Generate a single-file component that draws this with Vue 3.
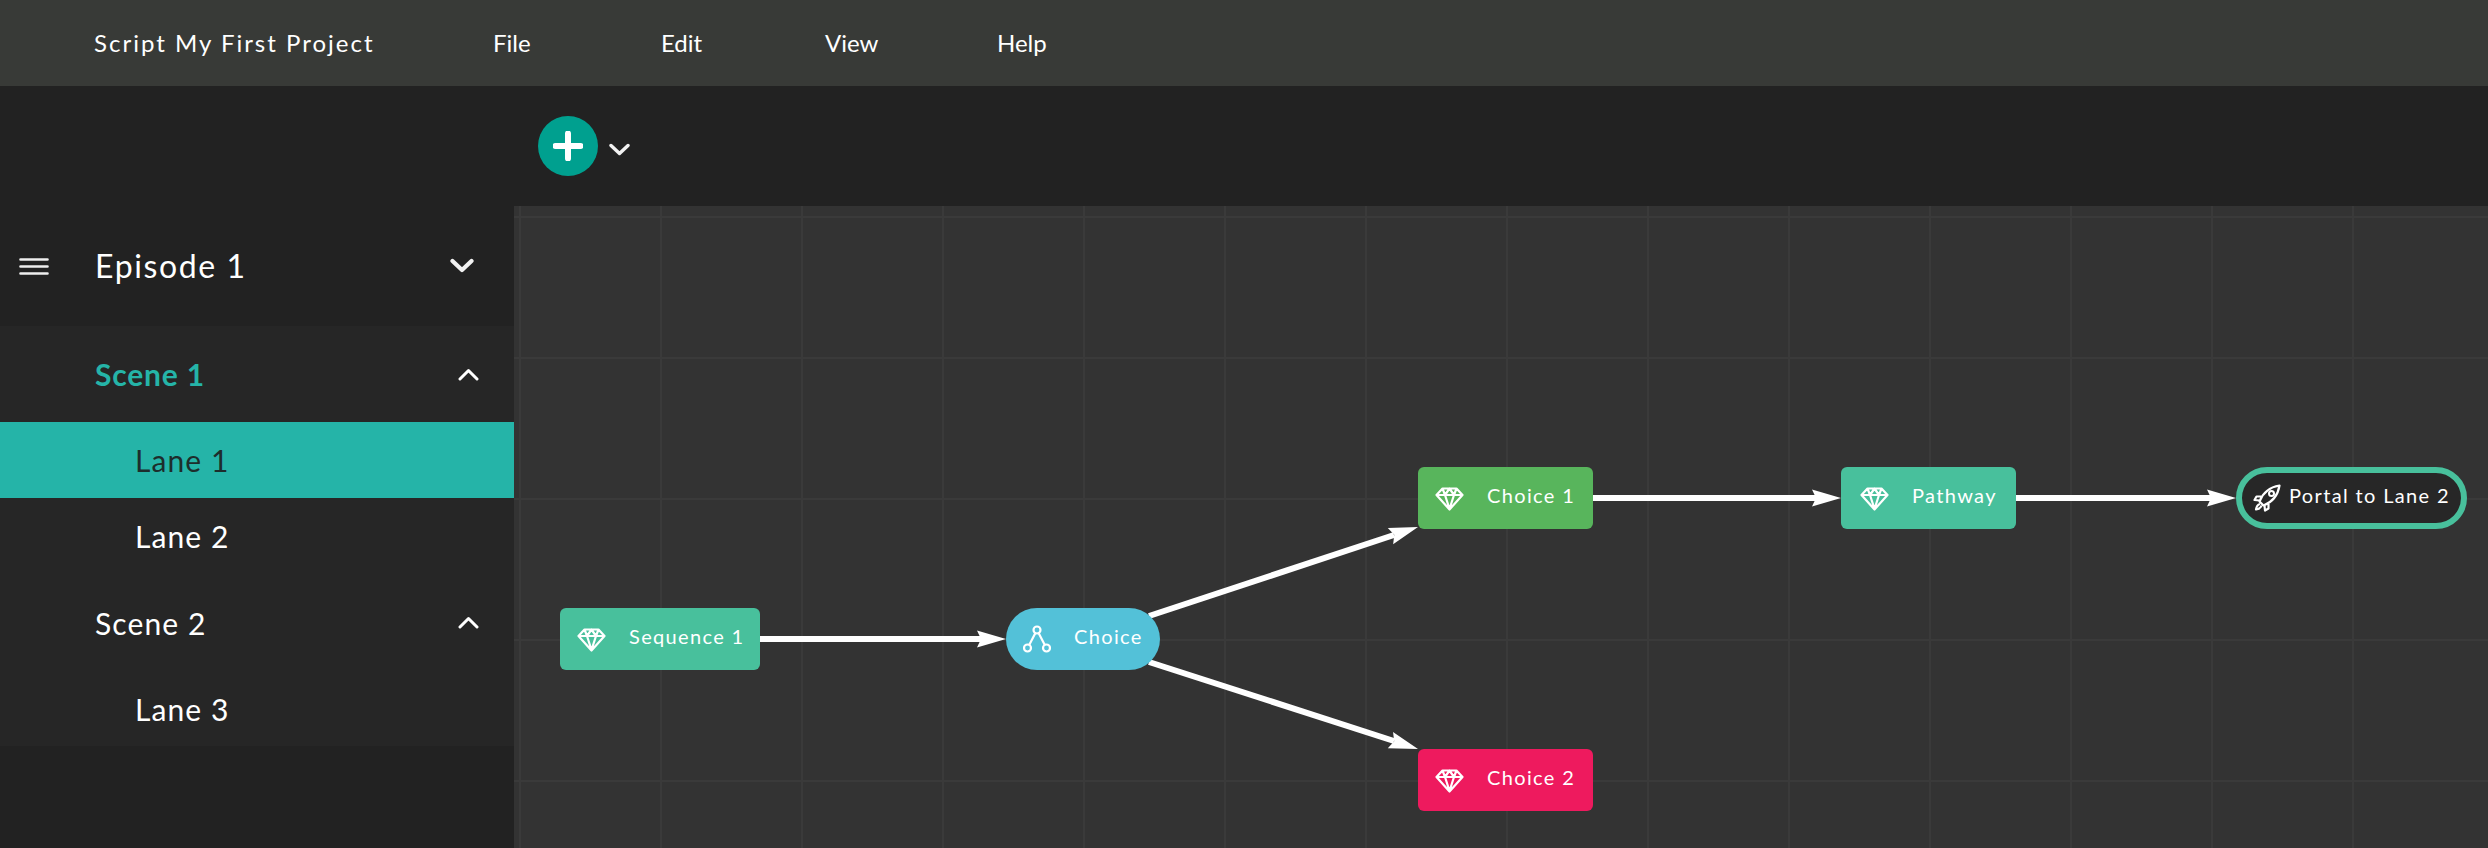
<script setup>
const menus = ['File', 'Edit', 'View', 'Help']
const boxes = [
  { label: 'Sequence 1', cls: 'n-seq' },
  { label: 'Choice 1', cls: 'n-c1' },
  { label: 'Pathway', cls: 'n-path' },
  { label: 'Choice 2', cls: 'n-c2' }
]
const links = [
  { x1: 246, y1: 433, x2: 470, y2: 433, tx: 492, ty: 433 },
  { x1: 635, y1: 410, x2: 880, y2: 329, tx: 904, ty: 321 },
  { x1: 635, y1: 456, x2: 880, y2: 535, tx: 904, ty: 543 },
  { x1: 1079, y1: 292, x2: 1305, y2: 292, tx: 1327, ty: 292 },
  { x1: 1502, y1: 292, x2: 1700, y2: 292, tx: 1722, ty: 292 }
]
const head = (l) => {
  const a = (Math.atan2(l.ty - l.y1, l.tx - l.x1) * 180) / Math.PI
  return `translate(${l.tx} ${l.ty}) rotate(${a})`
}
</script>

<template>
  <div class="app">
    <header class="topbar">
      <span class="title">Script My First Project</span>
      <nav class="menu">
        <span v-for="m in menus" :key="m" class="menu-item">{{ m }}</span>
      </nav>
    </header>
    <div class="body">
      <aside class="sidebar">
        <div class="episode">
          <svg class="burger" width="30" height="17" viewBox="0 0 30 17">
            <path d="M1.500 1.500h27M1.500 8.500h27M1.500 15.500h27" stroke="#eee" stroke-width="2.600" stroke-linecap="round" fill="none" />
          </svg>
          <span class="episode-label">Episode 1</span>
          <svg class="chev-ep" width="24" height="15" viewBox="0 0 24 15">
            <path d="M2.500 3l9.500 9 9.500-9" stroke="#f2f2f2" stroke-width="4.200" stroke-linecap="round" stroke-linejoin="round" fill="none" />
          </svg>
        </div>
        <div class="tree">
          <div class="scene active">
            <span>Scene 1</span>
            <svg class="chev-up" width="21" height="13" viewBox="0 0 21 13"><path d="M2 11l8.500-8.500L19 11" stroke="#fff" stroke-width="3" stroke-linecap="round" stroke-linejoin="round" fill="none" /></svg>
          </div>
          <div class="lane selected">Lane 1</div>
          <div class="lane">Lane 2</div>
          <div class="scene second">
            <span>Scene 2</span>
            <svg class="chev-up" width="21" height="13" viewBox="0 0 21 13"><path d="M2 11l8.500-8.500L19 11" stroke="#fff" stroke-width="3" stroke-linecap="round" stroke-linejoin="round" fill="none" /></svg>
          </div>
          <div class="lane last">Lane 3</div>
        </div>
      </aside>
      <main class="main">
        <div class="toolbar">
          <button class="add" type="button">
            <svg width="30" height="30" viewBox="0 0 30 30"><path d="M15 2.500v25M2.500 15h25" stroke="#fff" stroke-width="6" stroke-linecap="round" /></svg>
          </button>
          <svg class="chev-add" width="21" height="13" viewBox="0 0 21 13"><path d="M2 2.500l8.500 8 8.500-8" stroke="#f2f2f2" stroke-width="3.400" stroke-linecap="round" stroke-linejoin="round" fill="none" /></svg>
        </div>
        <section class="canvas">
          <svg class="links" width="1974" height="642" viewBox="0 0 1974 642">
            <g v-for="(l, i) in links" :key="i">
              <line :x1="l.x1" :y1="l.y1" :x2="l.x2" :y2="l.y2" stroke="#fff" stroke-width="6" />
              <path :transform="head(l)" d="M0 0L-29 -8.500L-25 0L-29 8.500Z" fill="#fff" />
            </g>
          </svg>
          <div v-for="b in boxes" :key="b.label" class="node box" :class="b.cls">
            <svg class="gem" width="29" height="24" viewBox="0 0 29 24">
              <path d="M7.500 1.500h14l6 6.500-13 14.500L1.500 8zM1.500 8h26M10 8l4.500 14 4.500-14M7.500 1.500L10 8l4.500-6.500L19 8l2.500-6.500" stroke="#fff" stroke-width="2.200" stroke-linejoin="round" fill="none" />
            </svg>
            <span class="label">{{ b.label }}</span>
          </div>
          <div class="node pill n-choice">
            <svg class="fork" width="28" height="28" viewBox="0 0 28 28">
              <circle cx="14" cy="5" r="3.500" />
              <circle cx="4.500" cy="23" r="3.500" />
              <circle cx="23.500" cy="23" r="3.500" />
              <path d="M12.400 8L6.200 20M15.600 8l6.200 12" />
            </svg>
            <span class="label">Choice</span>
          </div>
          <div class="node pill n-portal">
            <svg class="rocket" width="28" height="28" viewBox="0 0 28 28">
              <path d="M9.500 20.500l-3-3C9 11 14 3.500 26.500 1.500 24.500 14 17 19 10.500 21.500zM8 12.500H3.500L1.500 16l5 .5M15.500 20v4.500L12 26.500l-.5-5M7 20c-2 .5-3.500 2.500-4 5.500 3-.5 5-2 5.500-4" stroke="#fff" stroke-width="2.200" stroke-linejoin="round" fill="none" />
              <circle cx="18.500" cy="9.500" r="2.500" stroke="#fff" stroke-width="2" fill="none" />
            </svg>
            <span class="label">Portal to Lane 2</span>
          </div>
        </section>
      </main>
    </div>
  </div>
</template>

<style>
html, body { margin: 0; background: #222; }
</style>

<style scoped>
.app {
  width: 2488px;
  height: 848px;
  overflow: hidden;
  font-family: Lato, "Open Sans", sans-serif;
  color: #fff;
  background: #222;
  display: flex;
  flex-direction: column;
}
.topbar {
  height: 86px;
  flex: none;
  box-sizing: border-box;
  background: #383a37;
  display: flex;
  align-items: center;
  padding: 0 0 2px 94px;
  font-size: 24px;
}
.title { width: 399px; letter-spacing: 2px; }
.menu { display: flex; }
.menu-item { width: 168px; }
.menu-item:nth-child(2) { width: 164px; }
.menu-item:nth-child(3) { width: 172px; }
.body { flex: 1; display: flex; min-height: 0; }
.sidebar { width: 514px; flex: none; padding-top: 120px; background: #222; }
.episode {
  height: 120px;
  box-sizing: border-box;
  display: flex;
  align-items: center;
  position: relative;
  padding: 0 0 2px 95px;
  font-size: 32px;
  letter-spacing: 1.6px;
}
.burger { position: absolute; left: 19px; top: 52px; }
.chev-ep { position: absolute; left: 450px; top: 52px; }
.tree { background: #262626; }
.scene {
  height: 96px;
  display: flex;
  align-items: center;
  padding-left: 95px;
  font-size: 30px;
  letter-spacing: 1.1px;
  position: relative;
}
.scene.second { height: 97px; }
.scene.active { color: #25b4a8; font-weight: 700; letter-spacing: 0.8px; }
.chev-up { position: absolute; left: 458px; top: 42px; }
.lane {
  height: 76px;
  display: flex;
  align-items: center;
  padding: 0 0 1px 135px;
  box-sizing: border-box;
  font-size: 30px;
  letter-spacing: 1.1px;
}
.lane.selected { background: #25b4a8; color: #1d2d2c; }
.lane.last { height: 75px; padding-bottom: 0; }
.main { flex: 1; display: flex; flex-direction: column; min-width: 0; }
.toolbar {
  height: 120px;
  flex: none;
  display: flex;
  align-items: center;
  padding-left: 24px;
}
.add {
  width: 60px;
  height: 60px;
  padding: 0;
  border: 0;
  border-radius: 50%;
  background: #00a08f;
  display: flex;
  align-items: center;
  justify-content: center;
}
.chev-add { margin-left: 11px; margin-top: 6px; }
.canvas {
  flex: 1;
  position: relative;
  background-color: #333;
  background-image:
    linear-gradient(to right, #3a3a3a 2px, transparent 2px),
    linear-gradient(to bottom, #3a3a3a 2px, transparent 2px);
  background-size: 141px 141px;
  background-position: 5px 10px;
}
.links { position: absolute; left: 0; top: 0; }
.node {
  position: absolute;
  height: 62px;
  box-sizing: border-box;
  font-size: 20px;
  letter-spacing: 1.35px;
  display: flex;
  align-items: center;
}
.box { border-radius: 6px; width: 175px; padding-left: 17px; }
.box .label { margin-left: 23px; padding-bottom: 6px; }
.gem { margin-top: 1px; }
.n-seq { left: 46px; top: 402px; width: 200px; background: #48c09c; }
.n-c1 { left: 904px; top: 261px; background: #58b55c; }
.n-path { left: 1327px; top: 261px; padding-left: 19px; background: #48c09c; }
.n-c2 { left: 904px; top: 543px; background: #ee1a5e; }
.pill { border-radius: 31px; }
.n-choice { left: 492px; top: 402px; width: 154px; background: #53c1d8; padding-left: 17px; }
.n-choice .label { margin-left: 23px; padding-bottom: 6px; }
.fork circle, .fork path { fill: none; stroke: #fff; stroke-width: 2.200; }
.n-portal {
  left: 1722px;
  top: 261px;
  width: 231px;
  background: #272727;
  border: 6px solid #48c09c;
  padding-left: 11px;
}
.n-portal .label { margin-left: 8px; padding-bottom: 6px; white-space: nowrap; }
</style>
